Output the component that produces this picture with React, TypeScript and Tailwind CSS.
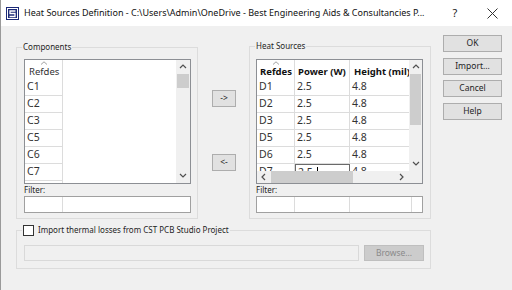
import React from "react";

const rowsLeft = ["C1", "C2", "C3", "C5", "C6", "C7", ""];
const rowsRight = ["D1", "D2", "D3", "D5", "D6"];

function Chevron({ dir }: { dir: "up" | "down" | "left" | "right" }) {
  const pts = {
    up: "1,5 4,2 7,5",
    down: "1,2 4,5 7,2",
    left: "5,1 2,4 5,7",
    right: "2,1 5,4 2,7",
  }[dir];
  return (
    <svg width="8" height="8" viewBox="0 0 8 8">
      <polyline points={pts} fill="none" stroke="#505050" strokeWidth="1.2" />
    </svg>
  );
}

function VScroll({ thumbTop, thumbH, w }: { thumbTop: number; thumbH: number; w: string }) {
  return (
    <div className={`${w} h-full bg-[#f0f0f0] flex flex-col relative`}>
      <div className="h-[14px] flex items-center justify-center">
        <Chevron dir="up" />
      </div>
      <div className="absolute left-[1px] right-[1px] bg-[#cdcdcd]" style={{ top: thumbTop, height: thumbH }} />
      <div className="flex-1" />
      <div className="h-[14px] flex items-center justify-center">
        <Chevron dir="down" />
      </div>
    </div>
  );
}

function GroupBox({
  label,
  className,
  children,
}: {
  label: React.ReactNode;
  className: string;
  children: React.ReactNode;
}) {
  return (
    <div className={`relative border border-[#dcdcdc] ${className}`}>
      <div className="absolute -top-[7px] left-[5px] px-[1px] bg-[#f0f0f0] text-[8px] leading-[12px] text-[#1e1e1e]">
        {label}
      </div>
      {children}
    </div>
  );
}

function Btn({ children, className = "" }: { children: React.ReactNode; className?: string }) {
  return (
    <div
      className={`h-[17px] border border-[#adadad] bg-[#e1e1e1] flex items-center justify-center text-[8.5px] text-[#1e1e1e] ${className}`}
    >
      {children}
    </div>
  );
}

function SortCaret() {
  return (
    <svg className="absolute top-[1px] left-1/2 -translate-x-1/2" width="8" height="4" viewBox="0 0 8 4">
      <polyline points="1,3.5 4,0.8 7,3.5" fill="none" stroke="#8a8a8a" strokeWidth="0.8" />
    </svg>
  );
}

function ComponentsList() {
  return (
    <div className="w-[167px] h-[125px] border border-[#8c8f94] bg-white flex overflow-hidden">
      <div className="flex-1 overflow-hidden">
        <div className="h-[19px] flex">
          <div className="relative w-[38px] border-r border-[#dcdcdc] flex items-end pb-[1px] pl-[4px] text-[9.5px] leading-[13px] text-[#333]">
            <SortCaret />
            Refdes
          </div>
        </div>
        {rowsLeft.map((r, i) => (
          <div key={i} className="h-[17px] flex">
            <div className="w-[38px] border-r border-b border-[#dcdcdc] pl-[2px] flex items-center text-[10.5px] text-[#333]">
              {r}
            </div>
          </div>
        ))}
      </div>
      <VScroll w="w-[14px]" thumbTop={14} thumbH={14} />
    </div>
  );
}

function HeatTable() {
  const cell = "border-r border-b border-[#dcdcdc] flex items-center text-[10.5px] text-[#333]";
  return (
    <div className="w-[167px] h-[125px] border border-[#8c8f94] bg-white flex flex-col overflow-hidden">
      <div className="h-[111px] flex">
        <div className="flex-1 overflow-hidden">
          <div className="h-[19px] flex w-[170px] font-bold text-[9.5px] text-[#111]">
            <div className="relative w-[38px] shrink-0 border-r border-[#dcdcdc] flex items-end pb-[1px] pl-[3px] leading-[13px]">
              <SortCaret />
              Refdes
            </div>
            <div className="w-[55px] shrink-0 border-r border-[#dcdcdc] flex items-end pb-[1px] pl-[3px] leading-[13px] whitespace-nowrap">
              Power (W)
            </div>
            <div className="w-[70px] shrink-0 flex items-end pb-[1px] pl-[4px] leading-[13px] whitespace-nowrap">
              Height (mil)
            </div>
          </div>
          {rowsRight.map((r) => (
            <div key={r} className="h-[17px] flex w-[170px]">
              <div className={`w-[38px] shrink-0 pl-[2px] ${cell}`}>{r}</div>
              <div className={`w-[55px] shrink-0 pl-[2px] ${cell}`}>2.5</div>
              <div className={`w-[70px] shrink-0 pl-[2px] ${cell}`}>4.8</div>
            </div>
          ))}
          <div className="h-[17px] flex w-[170px]">
            <div className={`w-[38px] shrink-0 pl-[2px] ${cell}`}>D7</div>
            <div className="w-[55px] shrink-0 border border-[#6a6a6a] pl-[2px] flex items-center text-[10.5px] text-[#333]">
              2.5<span className="ml-[4px] w-[1px] h-[11px] bg-black" />
            </div>
            <div className={`w-[70px] shrink-0 pl-[2px] ${cell}`}>4.8</div>
          </div>
        </div>
        <VScroll w="w-[13px]" thumbTop={14} thumbH={51} />
      </div>
      <div className="flex-1 flex">
        <div className="flex-1 bg-[#f0f0f0] flex items-center relative">
          <div className="w-[14px] flex justify-center">
            <Chevron dir="left" />
          </div>
          <div className="w-[82px] h-full bg-[#cdcdcd]" />
          <div className="flex-1" />
          <div className="w-[14px] flex justify-center">
            <Chevron dir="right" />
          </div>
        </div>
        <div className="w-[13px] bg-[#f0f0f0]" />
      </div>
    </div>
  );
}

function FilterBox({ seps }: { seps: string[] }) {
  return (
    <div className="w-[167px] h-[17px] border border-[#a0a0a0] bg-white flex">
      {seps.map((w, i) => (
        <div key={i} className={`${w} shrink-0 border-r border-[#dcdcdc]`} />
      ))}
      <div className="flex-1" />
    </div>
  );
}

function AppIcon() {
  return (
    <svg width="13" height="13" viewBox="0 0 13 13">
      <rect x="0" y="0" width="13" height="13" fill="#1c2a78" />
      <rect x="1.5" y="1.5" width="10" height="10" fill="none" stroke="#fff" strokeWidth="1" />
      <path d="M9.5 4 H4 V6.5 H9 V9.5 H3.5" fill="none" stroke="#fff" strokeWidth="1.3" />
    </svg>
  );
}

export default function App() {
  return (
    <div className="w-[512px] h-[290px] bg-[#f0f0f0] flex flex-col overflow-hidden border-l border-[#9a9a9a] font-['Noto_Sans','Open_Sans',sans-serif]">
      <div className="h-[26px] shrink-0 bg-white flex items-center">
        <div className="ml-[5px] mr-[5px] flex items-center">
          <AppIcon />
        </div>
        <div className="text-[9px] text-[#111] whitespace-nowrap flex-1 overflow-hidden">
          Heat Sources Definition - C:\Users\Admin\OneDrive - Best Engineering Aids &amp; Consultancies P...
        </div>
        <div className="w-[34px] text-center text-[11px] text-[#222]">?</div>
        <div className="w-[40px] flex justify-center">
          <svg width="11" height="11" viewBox="0 0 11 11">
            <path d="M0.5 0.5 L10.5 10.5 M10.5 0.5 L0.5 10.5" stroke="#333" strokeWidth="1" />
          </svg>
        </div>
      </div>

      <div className="flex">
        <div className="ml-[15px] mt-[21px] w-[415px] flex flex-col">
          <div className="flex">
            <GroupBox label="Components" className="w-[182px] h-[172px] pl-[7px] pt-[11px]">
              <ComponentsList />
              <div className="h-[12px] text-[8px] leading-[12px] text-[#1e1e1e]">Filter:</div>
              <FilterBox seps={["w-[38px]"]} />
            </GroupBox>
            <div className="w-[51px] flex flex-col pl-[14px]">
              <Btn className="w-[24px] mt-[43px]">-&gt;</Btn>
              <Btn className="w-[24px] mt-[47px]">&lt;-</Btn>
            </div>
            <GroupBox label="Heat Sources" className="w-[182px] h-[173px] -mt-[1px] pl-[6px] pt-[12px]">
              <HeatTable />
              <div className="h-[12px] text-[8px] leading-[12px] text-[#1e1e1e]">Filter:</div>
              <FilterBox seps={["w-[38px]", "w-[55px]", "w-[62px]"]} />
            </GroupBox>
          </div>
          <GroupBox
            label={
              <span className="flex items-center gap-[4px]">
                <span className="w-[11px] h-[11px] border border-[#333] bg-white" />
                Import thermal losses from CST PCB Studio Project
              </span>
            }
            className="mt-[11px] h-[39px] pl-[7px] pt-[14px] flex items-start"
          >
            <div className="w-[335px] h-[16px] border border-[#d9d9d9] bg-[#f0f0f0]" />
            <div className="ml-[5px] w-[60px] h-[16px] border border-[#bfbfbf] bg-[#cccccc] flex items-center justify-center text-[8.5px] text-[#8a8a8a]">
              Browse...
            </div>
          </GroupBox>
        </div>
        <div className="ml-[12px] mt-[9px] w-[59px] flex flex-col gap-[5px]">
          <Btn>OK</Btn>
          <Btn className="mt-[1px]">Import...</Btn>
          <Btn>Cancel</Btn>
          <Btn className="mt-[1px]">Help</Btn>
        </div>
      </div>
    </div>
  );
}
